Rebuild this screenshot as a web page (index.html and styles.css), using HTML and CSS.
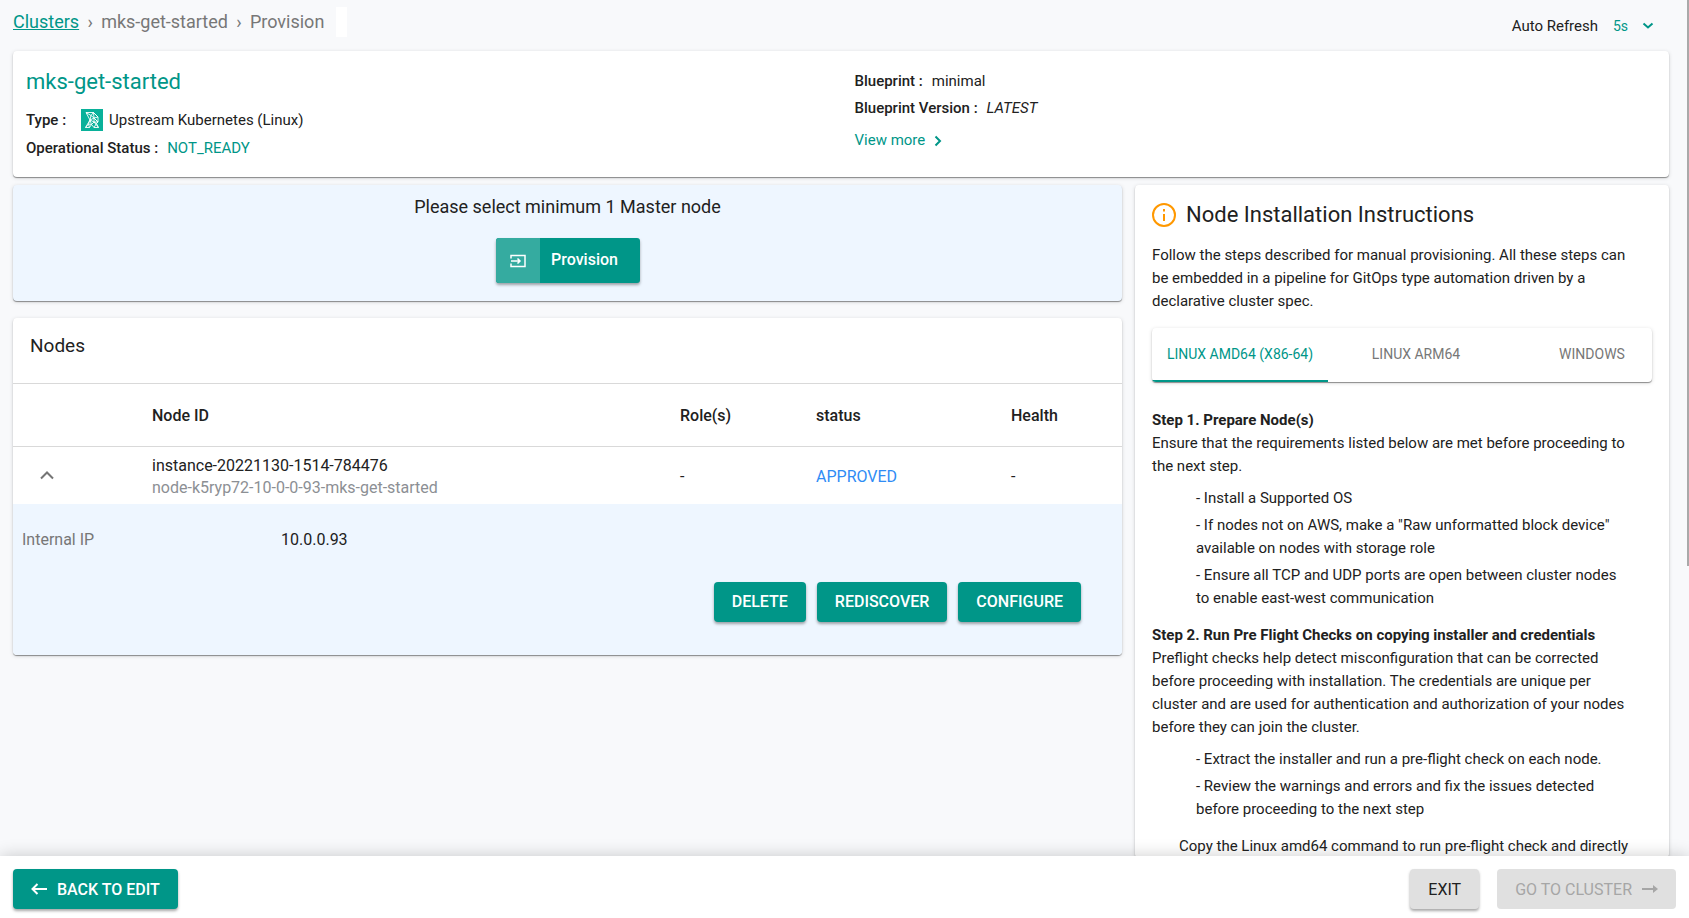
FILE: index.html
```html
<!DOCTYPE html>
<html lang="en">
<head>
<meta charset="utf-8">
<title>mks-get-started - Provision</title>
<link rel="stylesheet" href="styles.css">
</head>
<body>
<div class="app">
  <main class="page">
    <header class="topbar">
      <nav class="crumbs" aria-label="Breadcrumb">
        <a href="#">Clusters</a>
        <span class="sep">›</span>
        <span>mks-get-started</span>
        <span class="sep">›</span>
        <span>Provision</span>
        <span class="crumb-end"></span>
      </nav>
      <div class="refresh">
        <label for="interval">Auto Refresh</label>
        <div class="select">
          <select id="interval"><option>5s</option><option>10s</option><option>30s</option></select>
          <svg viewBox="0 0 12 8" width="12" height="8"><path d="M1.500 1.500 6 5.500l4.500-4" fill="none" stroke="currentColor" stroke-width="2"/></svg>
        </div>
      </div>
    </header>

    <section class="card summary">
      <div class="col">
        <h1>mks-get-started</h1>
        <p class="type"><b>Type :</b>
          <svg class="logo" viewBox="0 0 22 22" width="22" height="22"><path fill="#09b19a" d="M0 0h22v22H0z"/><g fill="none" stroke="#fff" stroke-width=".9"><path d="M5 3.500h7.500l4.500 4.500v5l-1.500 1.500L17.500 18.500H13L10.500 15.500 8.500 18.500H4.500L9 11z"/><path d="m5 3.500 5 3 2.500-3 .5 5.500 4-1-4.500-4.500M10 6.500 9 11l4-2 4 4-4 0-4-2M10 6.500l3 2.500v4l-2.500 2.500L9 11l-1.500 4 3 .5M13 13l2.500 1.500L13 18.500M8.500 18.500 7.500 15l-3 3.500M13 13l4.500 5.500M13 9l4 4"/></g></svg>
          <span>Upstream Kubernetes (Linux)</span></p>
        <p><b>Operational Status :</b> <span class="accent">NOT_READY</span></p>
      </div>
      <div class="col right">
        <p><b>Blueprint :</b> <span>minimal</span></p>
        <p><b>Blueprint Version :</b> <i>LATEST</i></p>
        <a class="more" href="#">View more
          <svg viewBox="0 0 8 12" width="8" height="12"><path d="m1.500 1.500 4.500 4.500-4.500 4.500" fill="none" stroke="currentColor" stroke-width="2"/></svg></a>
      </div>
    </section>

    <div class="columns">
      <div class="left">
        <section class="card provision">
          <p>Please select minimum 1 Master node</p>
          <button class="split" type="button">
            <span class="split-icon"><svg viewBox="0 0 16 14" width="16" height="14"><path d="M1 4.500V1.500h14v11H1V9.500M1 7h8.500M7.500 4.500 10 7 7.500 9.500" fill="none" stroke="#fff" stroke-width="1.500"/></svg></span>
            <span class="split-label">Provision</span>
          </button>
        </section>

        <section class="card nodes">
          <h2>Nodes</h2>
          <table>
            <colgroup><col class="c1"><col class="c2"><col class="c3"><col class="c4"><col class="c5"></colgroup>
            <thead><tr><th></th><th>Node ID</th><th>Role(s)</th><th>status</th><th>Health</th></tr></thead>
            <tbody><tr>
              <td class="toggle"><button type="button" aria-label="Collapse"><svg viewBox="0 0 14 9" width="14" height="9"><path d="m1 7.500 6-6 6 6" fill="none" stroke="currentColor" stroke-width="2"/></svg></button></td>
              <td>instance-20221130-1514-784476<br><span class="muted">node-k5ryp72-10-0-0-93-mks-get-started</span></td>
              <td>-</td><td class="approved">APPROVED</td><td>-</td>
            </tr></tbody>
          </table>
          <div class="detail">
            <dl><dt>Internal IP</dt><dd>10.0.0.93</dd></dl>
            <div class="actions">
              <button class="btn" type="button">DELETE</button>
              <button class="btn" type="button">REDISCOVER</button>
              <button class="btn" type="button">CONFIGURE</button>
            </div>
          </div>
        </section>
      </div>

      <aside class="card guide">
        <h2><svg viewBox="0 0 24 24" width="24" height="24"><circle cx="12" cy="12" r="11" fill="none" stroke="#ff9800" stroke-width="2"/><path d="M11 11h2v7h-2zM11 6h2v2.500h-2z" fill="#ff9800"/></svg>Node Installation Instructions</h2>
        <p>Follow the steps described for manual provisioning. All these steps can be embedded in a pipeline for GitOps type automation driven by a declarative cluster spec.</p>
        <div class="tabs" role="tablist">
          <button role="tab" aria-selected="true" type="button">LINUX AMD64 (X86-64)</button>
          <button role="tab" aria-selected="false" type="button">LINUX ARM64</button>
          <button role="tab" aria-selected="false" type="button">WINDOWS</button>
        </div>
        <h3>Step 1. Prepare Node(s)</h3>
        <p>Ensure that the requirements listed below are met before proceeding to the next step.</p>
        <ul>
          <li>- Install a Supported OS</li>
          <li>- If nodes not on AWS, make a "Raw unformatted block device" available on nodes with storage role</li>
          <li>- Ensure all TCP and UDP ports are open between cluster nodes to enable east-west communication</li>
        </ul>
        <h3>Step 2. Run Pre Flight Checks on copying installer and credentials</h3>
        <p>Preflight checks help detect misconfiguration that can be corrected before proceeding with installation. The credentials are unique per cluster and are used for authentication and authorization of your nodes before they can join the cluster.</p>
        <ul>
          <li>- Extract the installer and run a pre-flight check on each node.</li>
          <li>- Review the warnings and errors and fix the issues detected before proceeding to the next step</li>
        </ul>
        <p class="copy">Copy the Linux amd64 command to run pre-flight check and directly</p>
      </aside>
    </div>
  </main>
  <div class="scroll-thumb"></div>

  <footer class="footer">
    <button class="btn" type="button"><svg viewBox="0 0 16 12" width="16" height="12"><path d="M16 6H1.500M6.500 1l-5 5 5 5" fill="none" stroke="currentColor" stroke-width="2"/></svg>BACK TO EDIT</button>
    <div class="footer-end">
      <button class="btn grey" type="button">EXIT</button>
      <button class="btn grey" type="button" disabled>GO TO CLUSTER<svg viewBox="0 0 16 10" width="16" height="10"><path d="M0 4h11V1l5 4-5 4V6H0z" fill="currentColor"/></svg></button>
    </div>
  </footer>
</div>
</body>
</html>
```
FILE: styles.css
```css
* { box-sizing: border-box; }
body, h1, h2, h3, p, ul, dl, dd { margin: 0; padding: 0; }
body {
  font-family: Roboto, "Liberation Sans", sans-serif;
  font-size: 15px;
  line-height: 23px;
  color: #212121;
  background: #f8f9fb;
}
button, select { font: inherit; color: inherit; border: 0; background: none; padding: 0; margin: 0; }
b { font-weight: 500; }
ul { list-style: none; }
a { color: #009688; }
svg { flex: none; display: block; }

.app { position: relative; height: 100vh; display: flex; flex-direction: column; overflow: hidden; }
.page { flex: 1; min-height: 0; overflow: hidden; padding: 7px 20px 0 13px; }
.scroll-thumb { position: absolute; top: 0; right: 0; width: 2px; height: 566px; background: #a9a9a9; }
.card { background: #fff; border-radius: 4px; box-shadow: 0 1px 1px rgba(0,0,0,.4), 0 1px 4px rgba(0,0,0,.14); }
.accent { color: #009688; }

.topbar { display: flex; justify-content: space-between; height: 44px; }
.crumbs { display: flex; align-items: center; height: 30px; font-size: 18px; line-height: 20px; color: #777; }
.sep { width: 22px; text-align: center; }
.crumb-end { width: 11px; height: 30px; margin-left: 12px; background: #fff; }
.refresh { display: flex; align-items: center; gap: 15px; height: 38px; padding-right: 15px; }
.select { display: flex; align-items: center; color: #009688; font-size: 14px; }
.select select { appearance: none; width: 29px; }

.summary { display: grid; grid-template-columns: 1fr 1fr; padding: 16px 0 15px 13px; }
.summary h1 { font-size: 22px; line-height: 30px; font-weight: 400; color: #009688; margin-bottom: 9px; }
.summary p { display: flex; align-items: center; gap: 9px; height: 28px; }
.summary .type { gap: 6px; }
.type b { margin-right: 9px; }
.summary .right { padding: 1px 0 0 7px; }
.summary .right p { height: 27px; }
.more { display: flex; align-items: center; gap: 9px; margin-top: 7px; text-decoration: none; }

.columns { display: grid; grid-template-columns: minmax(0, 1109fr) minmax(0, 534fr); gap: 13px; align-items: start; margin-top: 8px; }
.left { display: grid; gap: 17px; }
.provision { background: #eef6ff; display: flex; flex-direction: column; align-items: center; gap: 19px; padding: 10px 0 18px; font-size: 18px; }
.provision p { line-height: 24px; }
.split { display: flex; height: 45px; border-radius: 3px; overflow: hidden; background: #009688; color: #fff; font-size: 16px; font-weight: 500; box-shadow: 0 2px 3px rgba(0,0,0,.35); }
.split-icon { width: 44px; height: 45px; display: grid; place-items: center; background: #35aba0; }
.split-label { width: 100px; padding-right: 10px; line-height: 43px; }

.nodes { overflow: hidden; }
.nodes h2 { font-size: 19px; font-weight: 400; line-height: 24px; padding: 16px 17px 25px; }
table { width: 100%; border-collapse: collapse; table-layout: fixed; font-size: 16px; }
.c1 { width: 123px; } .c3 { width: 136px; } .c4 { width: 195px; } .c5 { width: 127px; }
th, td { text-align: left; padding: 0 16px; }
th { height: 63px; font-weight: 500; border-top: 1px solid #d9d9d9; border-bottom: 1px solid #d9d9d9; }
td { height: 57px; line-height: 22px; padding-top: 3px; }
.toggle { padding: 0 27px; color: #757575; }
.muted { color: #8c8f94; }
.approved { color: #2f8cf5; }
.detail { background: #eef6ff; padding: 24px 41px 33px 9px; font-size: 16px; }
dl { display: flex; }
dt { width: 259px; color: #777; }
.actions { display: flex; justify-content: flex-end; gap: 11px; margin-top: 31px; }
.btn { display: flex; align-items: center; justify-content: center; height: 40px; padding: 0 18px; border-radius: 4px; background: #009688; color: #fff; font-size: 16px; font-weight: 500; box-shadow: 0 2px 3px rgba(0,0,0,.35); }

.guide { padding: 16px 17px 0; }
.guide h2 { display: flex; align-items: center; gap: 10px; font-size: 22px; font-weight: 400; line-height: 28px; margin-bottom: 15px; }
.guide p { padding-right: 16px; }
.tabs { display: flex; overflow: hidden; height: 54px; margin: 15px 0 27px; border-radius: 4px; box-shadow: 0 1px 1px rgba(0,0,0,.4), 0 1px 4px rgba(0,0,0,.14); }
.tabs button { flex: none; width: 176px; font-size: 14px; color: #777; border-bottom: 2px solid transparent; }
.tabs [aria-selected="true"] { color: #009688; border-color: #009688; }
.guide h3 { font-size: 15px; font-weight: 700; }
.guide ul { padding: 9px 27px 10px 44px; }
.guide li { margin-bottom: 4px; }
.guide .copy { padding: 0 0 0 27px; }

.footer { position: relative; display: flex; justify-content: space-between; padding: 13px 13px 9px; height: 62px; background: #fff; box-shadow: 0 0 16px rgba(0,0,0,.2); }
.footer svg { margin-right: 10px; }
.footer-end { display: flex; gap: 18px; }
.grey { background: #e0e0e0; color: #212121; font-weight: 400; }
.grey:disabled { color: #a6a6a6; box-shadow: none; }
.footer .grey svg { margin: 0 0 0 10px; }
```
